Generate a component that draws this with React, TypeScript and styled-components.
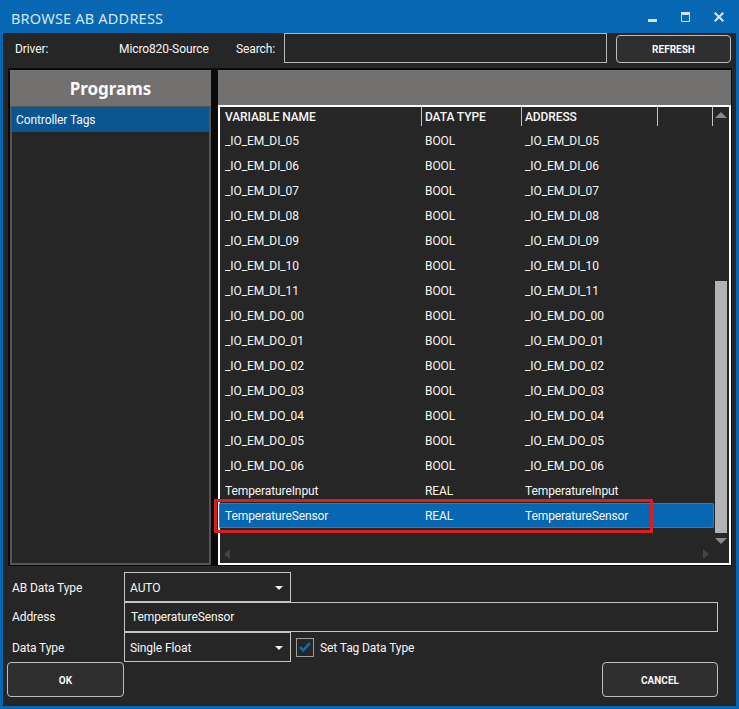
import React from 'react';
import styled, { createGlobalStyle } from 'styled-components';

const GlobalStyle = createGlobalStyle`
  html, body {
    margin: 0;
    padding: 0;
    background: #0767b3;
  }
  * {
    box-sizing: border-box;
  }
`;

const Window = styled.div`
  width: 739px;
  height: 709px;
  background: #0767b3;
  padding: 0 3px 3px 3px;
  display: flex;
  flex-direction: column;
  font-family: Roboto, "Noto Sans", sans-serif;
  font-size: 12px;
  letter-spacing: -0.1px;
  color: #f6f6f6;
  overflow: hidden;
`;

const TitleBar = styled.div`
  height: 33px;
  flex: none;
  display: flex;
  align-items: center;
  justify-content: space-between;
  padding: 2px 8px 0 8px;
`;

const Title = styled.div`
  font-family: "Noto Sans", sans-serif;
  font-size: 14.5px;
  color: #d4e6f5;
  letter-spacing: 0.2px;
`;

const WindowButtons = styled.div`
  display: flex;
  align-items: center;
  gap: 24px;
  padding: 0 4px 1px 0;
`;

const Body = styled.div`
  flex: 1;
  background: #262626;
  display: flex;
  flex-direction: column;
  position: relative;
`;

const Toolbar = styled.div`
  height: 35px;
  flex: none;
  display: flex;
  align-items: flex-start;
`;

const ToolbarLabel = styled.span<{ $width: number; $left: number }>`
  width: ${p => p.$width}px;
  margin-left: ${p => p.$left}px;
  line-height: 29px;
  padding-top: 2px;
  flex: none;
`;

const SearchBox = styled.div`
  width: 323px;
  height: 30px;
  border: 1px solid #b8b8b8;
  flex: none;
`;

const Button = styled.div<{ $width: number }>`
  width: ${p => p.$width}px;
  height: 35px;
  border: 1px solid #bdbdbd;
  border-radius: 4px;
  background: #2f2f2f;
  display: flex;
  align-items: center;
  justify-content: center;
  padding-top: 1px;
  font-size: 10px;
  font-weight: 700;
  letter-spacing: 0;
  color: #f8f8f8;
  flex: none;
`;

const RefreshButton = styled(Button)`
  height: 28px;
  margin: 2px 0 0 9px;
`;

const Panels = styled.div`
  width: 724px;
  height: 498px;
  margin-left: 5px;
  flex: none;
  background: #0a0a0a;
  padding: 2px 1px 1px 2px;
  display: flex;
  gap: 7px;
`;

const LeftPanel = styled.div`
  width: 201px;
  flex: none;
  display: flex;
  flex-direction: column;
`;

const PanelHeader = styled.div<{ $height: number }>`
  height: ${p => p.$height}px;
  flex: none;
  background: #737070;
  display: flex;
  align-items: center;
  justify-content: center;
  font-family: "Noto Sans", sans-serif;
  font-size: 17px;
  font-weight: 700;
  letter-spacing: 0;
  color: #fbfbfb;
`;

const ProgramList = styled.div`
  flex: 1;
  border: 2px solid #555555;
  border-top-width: 1px;
  background: #262626;
`;

const ProgramItem = styled.div`
  height: 25px;
  background: #0b5590;
  padding-left: 4px;
  display: flex;
  align-items: center;
`;

const RightPanel = styled.div`
  flex: 1;
  min-width: 0;
  display: flex;
  flex-direction: column;
`;

const TableFrame = styled.div`
  flex: 1;
  border: 2px solid #ffffff;
  background: #262626;
  display: flex;
  min-height: 0;
`;

const TableMain = styled.div`
  width: 494px;
  flex: none;
  display: flex;
  flex-direction: column;
`;

const HeaderRow = styled.div`
  height: 21px;
  flex: none;
  display: grid;
  grid-template-columns: 202px 100px 136px 55px;
  font-weight: 500;
  font-size: 12px;
`;

const HeaderCell = styled.div`
  padding-left: 3px;
  border-right: 1px solid #c4c4c4;
  height: 19px;
  line-height: 20px;
  margin-bottom: 2px;

  &:first-child {
    padding-left: 5px;
  }
`;

const Rows = styled.div`
  flex: none;
  display: flex;
  flex-direction: column;
  margin-left: -1px;
`;

const Row = styled.div<{ $selected?: boolean }>`
  height: 25px;
  display: grid;
  grid-template-columns: 200px 100px 1fr;
  align-items: center;
  background: ${p => (p.$selected ? '#0767b3' : 'transparent')};
  border-radius: ${p => (p.$selected ? '2px' : '0')};
  box-shadow: ${p => (p.$selected ? 'inset 0 0 0 1px #2a7fc4' : 'none')};
`;

const Cell = styled.div`
  padding-left: 6px;
  white-space: nowrap;
`;

const HorizontalBar = styled.div`
  flex: 1;
  display: flex;
  align-items: center;
  justify-content: space-between;
  padding: 16px 5px 0 4px;
`;

const ScrollColumn = styled.div`
  width: 12px;
  margin-left: 1px;
  flex: none;
  display: flex;
  flex-direction: column;
  align-items: center;
`;

const ArrowUp = styled.div`
  width: 0;
  height: 0;
  margin-top: 5px;
  border-left: 6px solid transparent;
  border-right: 6px solid transparent;
  border-bottom: 6px solid #8a8a8a;
`;

const ScrollThumb = styled.div`
  width: 12px;
  height: 252px;
  margin-top: 163px;
  background: #b3b3b3;
`;

const ArrowDown = styled.div`
  width: 0;
  height: 0;
  margin-top: 5px;
  border-left: 6px solid transparent;
  border-right: 6px solid transparent;
  border-top: 6px solid #8a8a8a;
`;

const ArrowSide = styled.div<{ $right?: boolean }>`
  width: 0;
  height: 0;
  border-top: 5px solid transparent;
  border-bottom: 5px solid transparent;
  ${p => (p.$right ? 'border-left: 6px solid #444444;' : 'border-right: 6px solid #444444;')}
`;

const Highlight = styled.div`
  position: absolute;
  left: 211px;
  top: 466px;
  width: 439px;
  height: 34px;
  border: 3px solid #d9201f;
  pointer-events: none;
`;

const Form = styled.div`
  flex: 1;
  display: grid;
  grid-template-columns: 121px 167px 1fr;
  grid-template-rows: 30px 30px 30px;
  padding: 6px 18px 0 0;
  align-content: start;
`;

const FormLabel = styled.div<{ $drop?: number }>`
  padding: ${p => p.$drop ?? 0}px 0 0 9px;
  display: flex;
  align-items: center;
`;

const Combo = styled.div`
  border: 1px solid #c4c4c4;
  display: flex;
  align-items: center;
  justify-content: space-between;
  padding: 1px 7px 0 5px;
`;

const ComboArrow = styled.div`
  width: 0;
  height: 0;
  border-left: 4px solid transparent;
  border-right: 4px solid transparent;
  border-top: 4px solid #f0f0f0;
`;

const AddressBox = styled.div`
  grid-column: 2 / 4;
  border: 1px solid #c4c4c4;
  display: flex;
  align-items: center;
  padding: 0 0 1px 6px;
`;

const CheckRow = styled.div`
  display: flex;
  align-items: center;
  gap: 6px;
  padding-left: 5px;
`;

const CheckBox = styled.div`
  width: 18px;
  height: 19px;
  border: 1px solid #9c9c9c;
  display: flex;
  align-items: center;
  justify-content: center;
`;

const CheckText = styled.span`
  margin-top: 2px;
`;

const Footer = styled.div`
  display: flex;
  justify-content: space-between;
  padding: 0 18px 9px 4px;
  flex: none;
`;

const tags = [
  ['_IO_EM_DI_05', 'BOOL'],
  ['_IO_EM_DI_06', 'BOOL'],
  ['_IO_EM_DI_07', 'BOOL'],
  ['_IO_EM_DI_08', 'BOOL'],
  ['_IO_EM_DI_09', 'BOOL'],
  ['_IO_EM_DI_10', 'BOOL'],
  ['_IO_EM_DI_11', 'BOOL'],
  ['_IO_EM_DO_00', 'BOOL'],
  ['_IO_EM_DO_01', 'BOOL'],
  ['_IO_EM_DO_02', 'BOOL'],
  ['_IO_EM_DO_03', 'BOOL'],
  ['_IO_EM_DO_04', 'BOOL'],
  ['_IO_EM_DO_05', 'BOOL'],
  ['_IO_EM_DO_06', 'BOOL'],
  ['TemperatureInput', 'REAL'],
  ['TemperatureSensor', 'REAL'],
];

const App: React.FC = () => (
  <>
    <GlobalStyle />
    <Window>
      <TitleBar>
        <Title>BROWSE AB ADDRESS</Title>
        <WindowButtons>
          <svg width="9" height="10" viewBox="0 0 9 10"><rect width="9" height="3" y="7" fill="#d4e6f5" /></svg>
          <svg width="9" height="10" viewBox="0 0 9 10"><path d="M.5 2.5h8v7h-8z" fill="none" stroke="#d4e6f5" /><rect width="9" height="2" fill="#d4e6f5" /></svg>
          <svg width="10" height="10" viewBox="0 0 10 10"><path d="M.7.7l8.6 8.6M9.3.7L.7 9.3" stroke="#d4e6f5" strokeWidth="2" /></svg>
        </WindowButtons>
      </TitleBar>
      <Body>
        <Toolbar>
          <ToolbarLabel $left={12} $width={104}>Driver:</ToolbarLabel>
          <ToolbarLabel $left={0} $width={117}>Micro820-Source</ToolbarLabel>
          <ToolbarLabel $left={0} $width={48}>Search:</ToolbarLabel>
          <SearchBox />
          <RefreshButton $width={115}>REFRESH</RefreshButton>
        </Toolbar>
        <Panels>
          <LeftPanel>
            <PanelHeader $height={36}>Programs</PanelHeader>
            <ProgramList>
              <ProgramItem>Controller Tags</ProgramItem>
            </ProgramList>
          </LeftPanel>
          <RightPanel>
            <PanelHeader $height={35} />
            <TableFrame>
              <TableMain>
                <HeaderRow>
                  <HeaderCell>VARIABLE NAME</HeaderCell>
                  <HeaderCell>DATA TYPE</HeaderCell>
                  <HeaderCell>ADDRESS</HeaderCell>
                  <HeaderCell />
                </HeaderRow>
                <Rows>
                  {tags.map(([name, type]) => (
                    <Row key={name} $selected={name === 'TemperatureSensor'}>
                      <Cell>{name}</Cell>
                      <Cell>{type}</Cell>
                      <Cell>{name}</Cell>
                    </Row>
                  ))}
                </Rows>
                <HorizontalBar>
                  <ArrowSide />
                  <ArrowSide $right />
                </HorizontalBar>
              </TableMain>
              <ScrollColumn>
                <ArrowUp />
                <ScrollThumb />
                <ArrowDown />
              </ScrollColumn>
            </TableFrame>
          </RightPanel>
        </Panels>
        <Form>
          <FormLabel $drop={1}>AB Data Type</FormLabel>
          <Combo>AUTO<ComboArrow /></Combo>
          <div />
          <FormLabel>Address</FormLabel>
          <AddressBox>TemperatureSensor</AddressBox>
          <FormLabel $drop={1}>Data Type</FormLabel>
          <Combo>Single Float<ComboArrow /></Combo>
          <CheckRow>
            <CheckBox>
              <svg width="12" height="10" viewBox="0 0 12 10"><path d="M1 5l3.2 3.4L11 1" fill="none" stroke="#0f6aa8" strokeWidth="2.6" /></svg>
            </CheckBox>
            <CheckText>Set Tag Data Type</CheckText>
          </CheckRow>
        </Form>
        <Footer>
          <Button $width={117}>OK</Button>
          <Button $width={116}>CANCEL</Button>
        </Footer>
        <Highlight />
      </Body>
    </Window>
  </>
);

export default App;
